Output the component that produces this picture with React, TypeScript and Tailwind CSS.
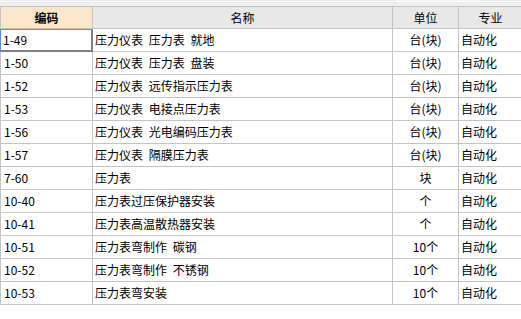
const rows: [string, string, string][] = [
  ["1-49", "压力仪表 压力表 就地", "台(块)"],
  ["1-50", "压力仪表 压力表 盘装", "台(块)"],
  ["1-52", "压力仪表 远传指示压力表", "台(块)"],
  ["1-53", "压力仪表 电接点压力表", "台(块)"],
  ["1-56", "压力仪表 光电编码压力表", "台(块)"],
  ["1-57", "压力仪表 隔膜压力表", "台(块)"],
  ["7-60", "压力表", "块"],
  ["10-40", "压力表过压保护器安装", "个"],
  ["10-41", "压力表高温散热器安装", "个"],
  ["10-51", "压力表弯制作 碳钢", "10个"],
  ["10-52", "压力表弯制作 不锈钢", "10个"],
  ["10-53", "压力表弯安装", "10个"],
];

export default function App() {
  return (
    <div className="w-[521px] h-[319px] bg-white overflow-hidden text-[12px] leading-none text-black font-['Noto_Sans_CJK_SC','Noto_Sans',sans-serif]">
      {/* toolbar edge */}
      <div className="h-[7px] bg-[#f0f0f0] border-b border-[#c4c4c4] flex">
        <div className="w-[396px]" />
        <div className="w-[84px] h-[2px] bg-[#f8f8f8]" />
      </div>

      <div className="grid grid-cols-[92px_300px_66px_63px] border-l border-[#c4c4c4]">
        {/* header */}
        <div className="h-[22px] bg-[#fde7cb] border-r border-b border-[#c4c4c4] flex items-center justify-center font-bold">编码</div>
        <div className="h-[22px] bg-[#e8e8e8] border-r border-b border-[#c4c4c4] flex items-center justify-center">名称</div>
        <div className="h-[22px] bg-[#e8e8e8] border-r border-b border-[#c4c4c4] flex items-center justify-center">单位</div>
        <div className="h-[22px] bg-[#e8e8e8] border-b border-[#c4c4c4] flex items-center justify-center">专业</div>

        {rows.map(([code, name, unit], i) => (
          <div key={code} className="contents">
            {i === 0 ? (
              <div className="h-[23px] border-l border-t border-[#4d94e0] border-r-2 border-b-2 border-r-[#808080] border-b-[#808080] -ml-px flex items-center pl-[2px]">
                {code}
              </div>
            ) : (
              <div className="h-[23px] border-r border-b border-[#c4c4c4] flex items-center pl-[3px]">{code}</div>
            )}
            <div className="h-[23px] border-r border-b border-[#c4c4c4] flex items-center pl-[2px] whitespace-pre [word-spacing:3px]">
              {name}
            </div>
            <div className="h-[23px] border-r border-b border-[#c4c4c4] flex items-center justify-center">{unit}</div>
            <div className="h-[23px] border-b border-[#c4c4c4] flex items-center pl-[2px]">自动化</div>
          </div>
        ))}
      </div>
    </div>
  );
}
